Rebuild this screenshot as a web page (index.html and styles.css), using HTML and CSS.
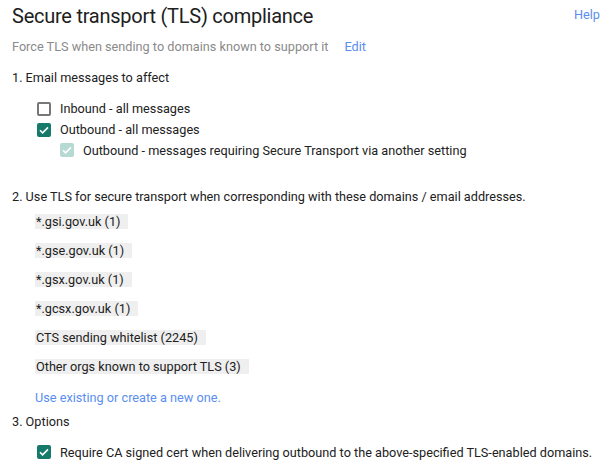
FILE: index.html
```html
<!DOCTYPE html>
<html>
<head>
<meta charset="utf-8">
<link rel="stylesheet" href="styles.css">
</head>
<body>
<div class="page">
  <div class="header">
    <h1 class="title">Secure transport (TLS) compliance</h1>
    <a class="help">Help</a>
  </div>
  <div class="subtitle"><span>Force TLS when sending to domains known to support it</span><a class="link edit">Edit</a></div>
  <div class="section">1. Email messages to affect</div>
  <div class="checks">
    <div class="check-row"><span class="cb"></span><span>Inbound - all messages</span></div>
    <div class="check-row"><span class="cb on"><svg viewBox="0 0 14 14"><path d="M3 7.2l2.6 2.6L11 4.4" fill="none" stroke="#fff" stroke-width="1.6"/></svg></span><span>Outbound - all messages</span></div>
    <div class="check-row sub"><span class="cb dis"><svg viewBox="0 0 14 14"><path d="M3 7.2l2.6 2.6L11 4.4" fill="none" stroke="#fff" stroke-width="1.6"/></svg></span><span>Outbound - messages requiring Secure Transport via another setting</span></div>
  </div>
  <div class="section s2">2. Use TLS for secure transport when corresponding with these domains / email addresses.</div>
  <div class="chips">
    <div class="chip">*.gsi.gov.uk (1)</div>
    <div class="chip">*.gse.gov.uk (1)</div>
    <div class="chip">*.gsx.gov.uk (1)</div>
    <div class="chip">*.gcsx.gov.uk (1)</div>
    <div class="chip">CTS sending whitelist (2245)</div>
    <div class="chip">Other orgs known to support TLS (3)</div>
    <a class="link create">Use existing or create a new one.</a>
  </div>
  <div class="section s3">3. Options</div>
  <div class="checks opts">
    <div class="check-row"><span class="cb on"><svg viewBox="0 0 14 14"><path d="M3 7.2l2.6 2.6L11 4.4" fill="none" stroke="#fff" stroke-width="1.6"/></svg></span><span>Require CA signed cert when delivering outbound to the above-specified TLS-enabled domains.</span></div>
  </div>
</div>
</body>
</html>
```
FILE: styles.css
```css
html, body {
  margin: 0;
  padding: 0;
  background: #fff;
}
body {
  font-family: Roboto, "Liberation Sans", Arial, sans-serif;
  font-size: 12.7px;
  color: #212121;
}
.page {
  padding: 4px 8px 0 12px;
  display: flex;
  flex-direction: column;
}
.header {
  display: flex;
  justify-content: space-between;
  align-items: flex-start;
}
.title {
  margin: 0;
  font-size: 20px;
  font-weight: 400;
  line-height: 24px;
  letter-spacing: -0.25px;
  color: #202020;
}
.help {
  font-size: 12.7px;
  line-height: 16px;
  margin-top: 3px;
  color: #5a8ef0;
}
.link {
  color: #5a8ef0;
}
.subtitle {
  margin-top: 11px;
  line-height: 16px;
  color: #8a8a8a;
}
.edit {
  margin-left: 16px;
}
.section {
  line-height: 16px;
  margin-top: 15px;
}
.checks {
  margin-top: 12px;
  padding-left: 25px;
  display: flex;
  flex-direction: column;
}
.check-row {
  display: flex;
  align-items: center;
  height: 21px;
  gap: 9px;
}
.check-row.sub {
  padding-left: 23px;
  height: 20px;
}
.cb {
  box-sizing: border-box;
  width: 14px;
  height: 14px;
  border: 2px solid #777;
  border-radius: 2px;
  display: flex;
  flex: none;
}
.cb svg {
  width: 14px;
  height: 14px;
  margin: -2px;
}
.cb.on {
  background: #167a6b;
  border-color: #167a6b;
}
.cb.dis {
  background: #b6d9d3;
  border-color: #b6d9d3;
}
.s2 {
  margin-top: 29px;
}
.chips {
  margin-top: 9px;
  padding-left: 23px;
  display: flex;
  flex-direction: column;
  align-items: flex-start;
  gap: 14px;
}
.chip {
  background: #efefef;
  line-height: 15px;
  padding: 0 8px 0 1px;
}
.create {
  line-height: 16px;
  margin-top: 2px;
}
.s3 {
  margin-top: 8px;
}
.opts {
  margin-top: 12px;
}
.opts .check-row {
  height: 20px;
}
```
